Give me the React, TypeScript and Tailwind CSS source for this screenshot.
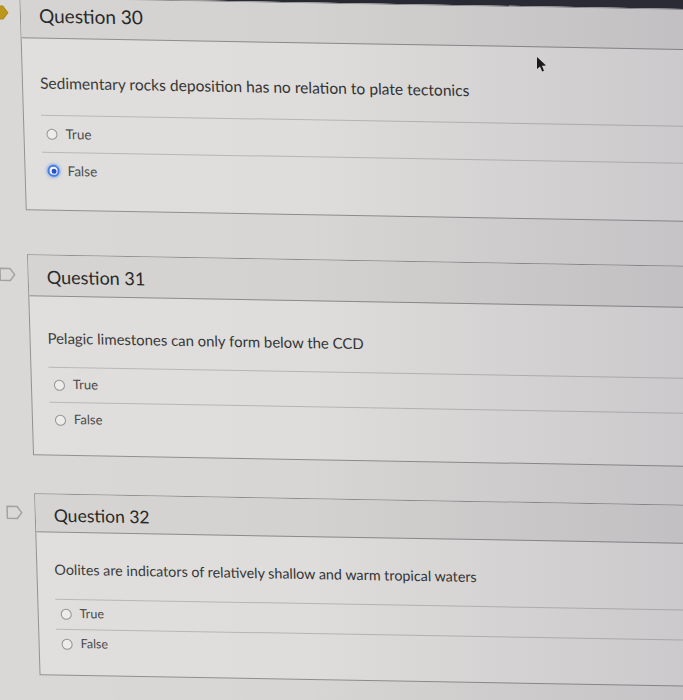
import React from "react";

type Opt = { label: string; selected?: boolean };

type CardCfg = {
  title: string;
  text: string;
  flag: "filled" | "outline";
  rowCls: string;
  gutterCls: string;
  headerCls: string;
  headingCls: string;
  bodyCls: string;
  textCls: string;
  optRowCls: string;
  optTextCls: string;
  options: Opt[];
};

const cards: CardCfg[] = [
  {
    title: "Question 30",
    text: "Sedimentary rocks deposition has no relation to plate tectonics",
    flag: "filled",
    rowCls: "flex",
    gutterCls: "h-[31px]",
    headerCls: "h-[40px] pt-[5px]",
    headingCls: "text-[19px] leading-[24px]",
    bodyCls: "pt-[34px] pb-[21px]",
    textCls: "text-[15.6px] leading-[20px] mb-[22px]",
    optRowCls: "h-[37px]",
    optTextCls: "text-[13.5px]",
    options: [{ label: "True" }, { label: "False", selected: true }],
  },
  {
    title: "Question 31",
    text: "Pelagic limestones can only form below the CCD",
    flag: "outline",
    rowCls: "flex mt-[44px]",
    gutterCls: "h-[40px]",
    headerCls: "h-[41px] pt-[9px]",
    headingCls: "text-[18px] leading-[24px]",
    bodyCls: "pt-[31px] pb-[18px]",
    textCls: "text-[14.9px] leading-[20px] mb-[19px]",
    optRowCls: "h-[35px]",
    optTextCls: "text-[13px]",
    options: [{ label: "True" }, { label: "False" }],
  },
  {
    title: "Question 32",
    text: "Oolites are indicators of relatively shallow and warm tropical waters",
    flag: "outline",
    rowCls: "flex mt-[38px]",
    gutterCls: "h-[38px]",
    headerCls: "h-[38px] pt-[10px]",
    headingCls: "text-[17.5px] leading-[22px]",
    bodyCls: "pt-[27px] pb-[16px]",
    textCls: "text-[14.3px] leading-[20px] mb-[19px]",
    optRowCls: "h-[30px]",
    optTextCls: "text-[12.5px]",
    options: [{ label: "True" }, { label: "False" }],
  },
];

function Flag({ kind }: { kind: "filled" | "outline" }) {
  return (
    <svg width="18" height="15" viewBox="0 0 18 15" className="-ml-[10px] shrink-0">
      {kind === "filled" ? (
        <path d="M1 1 H12 L17 7.5 L12 14 H1 Z" fill="#b8900f" stroke="#a88208" strokeWidth="1" />
      ) : (
        <path d="M1.5 1.5 H11.5 L16 7.5 L11.5 13.5 H1.5 Z" fill="none" stroke="#9c9c9c" strokeWidth="1.5" strokeLinejoin="round" />
      )}
    </svg>
  );
}

function Radio({ selected }: { selected?: boolean }) {
  if (selected) {
    return (
      <span className="flex h-[12px] w-[12px] shrink-0 items-center justify-center rounded-full border-[2px] border-[#3a78e6] bg-[#f4f6fb] shadow-[0_0_3px_1px_rgba(70,120,235,0.55)]">
        <span className="h-[5px] w-[5px] rounded-full bg-[#1d47c9]" />
      </span>
    );
  }
  return <span className="h-[11px] w-[11px] shrink-0 rounded-full border-[1.5px] border-[#8e8e8e] bg-[#ecebea]" />;
}

function Card({ c }: { c: CardCfg }) {
  return (
    <div className={c.rowCls}>
      <div className="w-[19px] shrink-0">
        <div className={`flex items-center ${c.gutterCls}`}>
          <Flag kind={c.flag} />
        </div>
      </div>
      <div className="-mr-[60px] flex-1 border border-[#8c8c8c] bg-[#dedddb]">
        <div className={`border-b border-[#8a8a8a] bg-[#d3d2d0] pl-[18px] ${c.headerCls}`}>
          <h3 className={`font-normal text-[#202020] ${c.headingCls}`}>{c.title}</h3>
        </div>
        <div className={`pl-[17px] ${c.bodyCls}`}>
          <p className={`text-[#333333] ${c.textCls}`}>{c.text}</p>
          {c.options.map((o) => (
            <div key={o.label} className={`flex items-center gap-[8px] border-t border-[#b6b5b3] pl-[5px] ${c.optRowCls}`}>
              <Radio selected={o.selected} />
              <span className={`text-[#444444] ${c.optTextCls}`}>{o.label}</span>
            </div>
          ))}
        </div>
      </div>
    </div>
  );
}

export default function App() {
  return (
    <div className="relative h-[700px] w-[683px] overflow-hidden bg-[#d7d6d4] font-['Lato','Noto_Sans',sans-serif]">
      <div className="-mt-[17px] origin-top-left skew-x-[1.7deg] skew-y-[1deg]">
        <div className="ml-[100px] h-[14px] bg-[#272931]" />
        {cards.map((c) => (
          <Card key={c.title} c={c} />
        ))}
      </div>
      <div className="pointer-events-none absolute inset-0 bg-[linear-gradient(90deg,rgba(255,255,255,0.06)_0%,rgba(0,0,0,0)_45%,rgba(70,60,90,0.12)_100%)]" />
      <svg width="12" height="17" viewBox="0 0 12 17" className="absolute left-[536px] top-[56px] blur-[0.4px]">
        <path d="M1 1 L1 13 L4 10.5 L6.2 15.5 L8 14.7 L5.9 9.8 L10 9.6 Z" fill="#1a1a1a" />
      </svg>
    </div>
  );
}
